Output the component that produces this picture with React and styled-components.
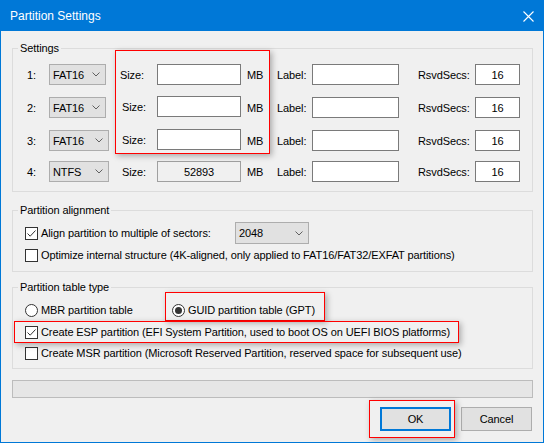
import React from "react";
import styled, { createGlobalStyle } from "styled-components";

const GlobalStyle = createGlobalStyle`
  html, body {
    margin: 0;
    padding: 0;
    background: #f0f0f0;
  }
  body {
    font-family: "Liberation Sans", Arial, sans-serif;
    font-size: 11px;
    letter-spacing: -0.1px;
    color: #000;
  }
  * {
    box-sizing: border-box;
  }
`;

const Window = styled.div`
  position: relative;
  width: 544px;
  height: 443px;
  border: 1px solid #0078d7;
  background: #f0f0f0;
  display: flex;
  flex-direction: column;
  overflow: hidden;
`;

const TitleBar = styled.div`
  flex: none;
  height: 30px;
  background: #0078d7;
  color: #fff;
  display: flex;
  align-items: center;
  justify-content: space-between;
  padding: 0 9px;
  font-family: "Liberation Sans", sans-serif;
  font-size: 12px;
  letter-spacing: 0;
`;

const Body = styled.div`
  flex: 1;
  display: flex;
  flex-direction: column;
  padding: 11px 10px 0 11px;
`;

const Group = styled.fieldset`
  margin: ${(p) => p.$top || 0}px 0 0 0;
  padding: 0;
  border: 1px solid #dcdcdc;
  min-width: 0;
`;

const Legend = styled.legend`
  margin-left: 5px;
  padding: 0 2px;
  line-height: 13px;
  font-size: 11px;
`;

const GroupInner = styled.div`
  display: flex;
  flex-direction: column;
  padding: ${(p) => p.$pad};
`;

const SettingsRow = styled.div`
  display: grid;
  grid-template-columns: 22px 60px 48px 84px 36px 35px 87px 76px 45px;
  align-items: center;
  height: 21px;
  margin-top: ${(p) => p.$gap || 0}px;
`;

const Text = styled.span`
  white-space: nowrap;
  padding-left: ${(p) => p.$pl || 0}px;
  margin-bottom: ${(p) => (p.$lift || 0) * 2}px;
`;

const Combo = styled.div`
  width: ${(p) => p.$w}px;
  height: ${(p) => p.$h || 21}px;
  background: #e1e1e1;
  border: 1px solid #adadad;
  display: flex;
  align-items: center;
  justify-content: space-between;
  padding: 0 5px 0 3px;
`;

const Edit = styled.div`
  width: ${(p) => p.$w}px;
  height: 21px;
  background: ${(p) => (p.$disabled ? "#f0f0f0" : "#fff")};
  border: 1px solid ${(p) => (p.$disabled ? "#a0a0a0" : "#7a7a7a")};
  display: flex;
  align-items: center;
  justify-content: center;
  margin-bottom: ${(p) => (p.$lift || 0) * 2}px;
`;

const OptionRow = styled.div`
  display: flex;
  align-items: center;
  height: ${(p) => p.$h}px;
`;

const Option = styled.label`
  display: flex;
  align-items: center;
  gap: 3px;
  white-space: nowrap;
  width: ${(p) => (p.$w ? `${p.$w}px` : "auto")};
`;

const Box = styled.span`
  flex: none;
  width: 13px;
  height: 13px;
  background: #fff;
  border: 1px solid #333;
  display: flex;
  align-items: center;
  justify-content: center;
`;

const Radio = styled(Box)`
  border-radius: 50%;
`;

const Dot = styled.span`
  width: 7px;
  height: 7px;
  border-radius: 50%;
  background: #333;
`;

const Progress = styled.div`
  margin-top: 11px;
  height: 18px;
  background: #e6e6e6;
  border: 1px solid #bcbcbc;
`;

const Buttons = styled.div`
  display: flex;
  justify-content: flex-end;
  gap: 10px;
  margin-top: 9px;
  padding-right: 1px;
`;

const Button = styled.button`
  width: 71px;
  height: 24px;
  margin: 0;
  padding: 0;
  font-family: inherit;
  font-size: 11px;
  letter-spacing: inherit;
  color: #000;
  background: #e1e1e1;
  border: ${(p) => (p.$default ? "2px solid #0078d7" : "1px solid #adadad")};
`;

const Mark = styled.div`
  position: absolute;
  left: ${(p) => p.$x}px;
  top: ${(p) => p.$y}px;
  width: ${(p) => p.$w}px;
  height: ${(p) => p.$h}px;
  border: 1px solid #ff0000;
  box-shadow: 2px 2px 6px rgba(0, 0, 0, 0.3);
  pointer-events: none;
`;

const Chevron = () => (
  <svg width="8" height="5" viewBox="0 0 8 5">
    <path d="M0.5 0.5 L4 4 L7.5 0.5" fill="none" stroke="#606060" strokeWidth="1" />
  </svg>
);

const Close = () => (
  <svg width="11" height="11" viewBox="0 0 11 11">
    <path d="M0.5 0.5 L10.5 10.5 M10.5 0.5 L0.5 10.5" stroke="#fff" strokeWidth="1.1" />
  </svg>
);

const Check = ({ checked }) => (
  <Box>
    {checked && (
      <svg width="11" height="11" viewBox="0 0 11 11">
        <path d="M1.5 5.5 L4.2 8.2 L9.5 2.5" fill="none" stroke="#333" strokeWidth="1" />
      </svg>
    )}
  </Box>
);

const partitions = [
  { n: 1, fs: "FAT16", combo: 57, gap: 0, lift: 0, sizePl: 11 },
  { n: 2, fs: "FAT16", combo: 57, gap: 11, lift: 1, sizePl: 13 },
  { n: 3, fs: "FAT16", combo: 60, gap: 12, lift: 1, sizePl: 13 },
  { n: 4, fs: "NTFS", combo: 60, gap: 11, lift: 0, sizePl: 13, size: "52893" },
];

export default function App() {
  return (
    <>
      <GlobalStyle />
      <Window>
        <TitleBar>
          <span>Partition Settings</span>
          <Close />
        </TitleBar>
        <Body>
          <Group>
            <Legend>Settings</Legend>
            <GroupInner $pad="9px 0 9px 14px">
              {partitions.map((p) => (
                <SettingsRow key={p.n} $gap={p.gap}>
                  <Text>{p.n}:</Text>
                  <Combo $w={p.combo}>
                    <span>{p.fs}</span>
                    <Chevron />
                  </Combo>
                  <Text $pl={p.sizePl} $lift={p.lift}>Size:</Text>
                  <Edit $w={84} $lift={p.lift} $disabled={!!p.size}>
                    {p.size}
                  </Edit>
                  <Text $pl={6}>MB</Text>
                  <Text>Label:</Text>
                  <Edit $w={87} />
                  <Text $pl={19}>RsvdSecs:</Text>
                  <Edit $w={45}>16</Edit>
                </SettingsRow>
              ))}
            </GroupInner>
          </Group>

          <Group $top={12}>
            <Legend>Partition alignment</Legend>
            <GroupInner $pad="5px 0 5px 12px">
              <OptionRow $h={22}>
                <Option $w={210}>
                  <Check checked />
                  <span>Align partition to multiple of sectors:</span>
                </Option>
                <Combo $w={74} $h={22}>
                  <span>2048</span>
                  <Chevron />
                </Combo>
              </OptionRow>
              <OptionRow $h={22}>
                <Option>
                  <Check />
                  <span>
                    Optimize internal structure (4K-aligned, only applied to FAT16/FAT32/EXFAT
                    partitions)
                  </span>
                </Option>
              </OptionRow>
            </GroupInner>
          </Group>

          <Group $top={9}>
            <Legend>Partition table type</Legend>
            <GroupInner $pad="5px 0 5px 12px">
              <OptionRow $h={22}>
                <Option $w={147}>
                  <Radio />
                  <span>MBR partition table</span>
                </Option>
                <Option>
                  <Radio>
                    <Dot />
                  </Radio>
                  <span>GUID partition table (GPT)</span>
                </Option>
              </OptionRow>
              <OptionRow $h={22}>
                <Option>
                  <Check checked />
                  <span>
                    Create ESP partition (EFI System Partition, used to boot OS on UEFI BIOS
                    platforms)
                  </span>
                </Option>
              </OptionRow>
              <OptionRow $h={20}>
                <Option>
                  <Check />
                  <span>
                    Create MSR partition (Microsoft Reserved Partition, reserved space for
                    subsequent use)
                  </span>
                </Option>
              </OptionRow>
            </GroupInner>
          </Group>

          <Progress />

          <Buttons>
            <Button $default>OK</Button>
            <Button>Cancel</Button>
          </Buttons>
        </Body>

        <Mark $x={114} $y={49} $w={155} $h={104} />
        <Mark $x={164} $y={291} $w={160} $h={29} />
        <Mark $x={13} $y={320} $w={445} $h={22} />
        <Mark $x={368} $y={399} $w={86} $h={38} />
      </Window>
    </>
  );
}
